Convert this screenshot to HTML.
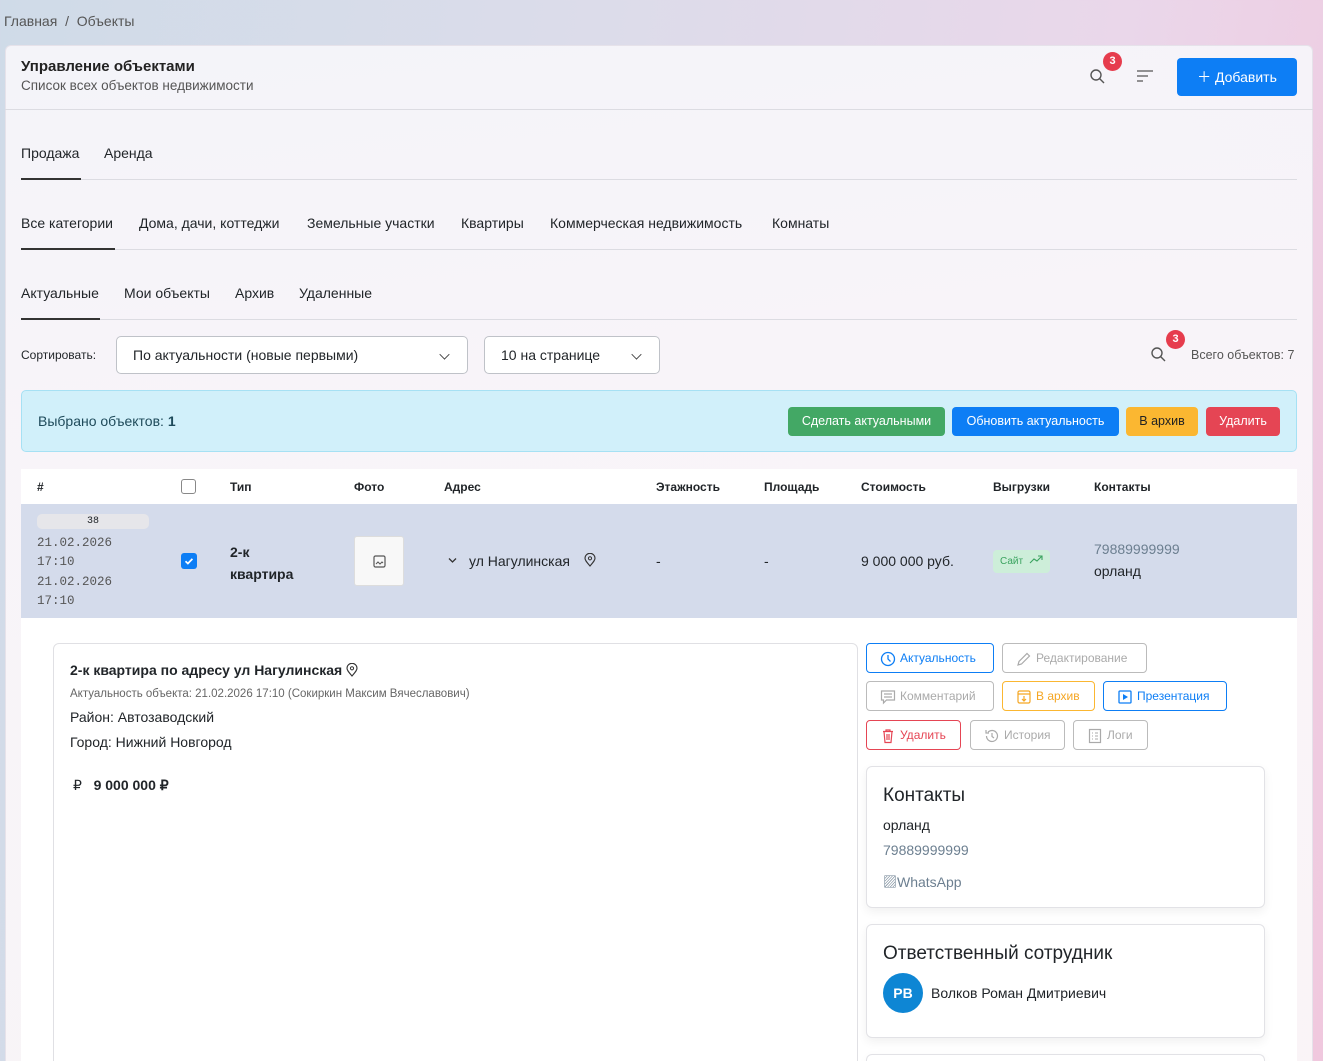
<!DOCTYPE html>
<html><head><meta charset="utf-8"><style>
*{box-sizing:border-box;margin:0;padding:0}
html{width:1323px;height:1061px;overflow:hidden}
body{width:1323px;height:1061px;overflow:hidden;position:relative;font-family:"Liberation Sans","Noto Sans CJK SC",sans-serif;color:#212529;
background:linear-gradient(100deg,#cfdbe8 0%,#dcdcea 40%,#ead7ea 75%,#f0c8de 100%);}
.a{position:absolute;white-space:nowrap}
.card{position:absolute;left:5px;top:45px;width:1308px;height:1016px;border-radius:6px 6px 0 0;
background:linear-gradient(180deg,rgba(246,245,250,.95),rgba(250,246,250,.95) 40%,rgba(250,246,248,.95));border:1px solid #e6e2ea;border-bottom:none}
.hl{position:absolute;left:21px;width:1276px;height:1px;background:#dcdce2}
.ul{position:absolute;height:2px;background:#333}
.t14{font-size:14px}
.sel{position:absolute;height:38px;border:1px solid #bfc2c8;border-radius:5px;background:#fff;font-size:14px;padding:10px 16px}
.chev{position:absolute;right:18px;top:13px;width:9px;height:9px;border-right:1.6px solid #333;border-bottom:1.6px solid #333;transform:rotate(45deg) scale(.8)}
.badge{position:absolute;width:19px;height:19px;border-radius:50%;background:#e63c4d;color:#fff;font-size:11px;font-weight:bold;text-align:center;line-height:19px}
.btn{position:absolute;height:29px;border-radius:4px;font-size:12.5px;color:#fff;text-align:center;line-height:29px}
.th{position:absolute;top:480px;font-size:12px;font-weight:bold}
.ob{position:absolute;height:30px;border:1px solid #bbb;border-radius:4px;font-size:12px;color:#aaa;line-height:28px;padding-left:33px;background:#fff}
.ob svg{position:absolute;left:13px;top:7px}
.box{position:absolute;background:#fff;border:1px solid #e2e2e6;border-radius:6px;box-shadow:0 4px 10px rgba(0,0,0,.06)}
</style></head><body>
<div class="a t14" style="left:4px;top:13px;color:#555">Главная&nbsp; / &nbsp;Объекты</div>
<div class="card"></div>
<div class="a" style="left:21px;top:58px;font-size:15px;font-weight:bold;color:#222">Управление объектами</div>
<div class="a" style="left:21px;top:78px;font-size:13.5px;color:#555">Список всех объектов недвижимости</div>
<div class="a" style="left:5px;top:109px;width:1308px;height:1px;background:#dcdce2"></div>
<svg class="a" style="left:1089px;top:68px" width="17" height="17" viewBox="0 0 17 17"><circle cx="7" cy="7" r="5" fill="none" stroke="#555" stroke-width="1.4"/><path d="M10.5 10.5l4.5 4.5" stroke="#555" stroke-width="1.4"/></svg>
<div class="badge" style="left:1103px;top:52px">3</div>
<svg class="a" style="left:1137px;top:70px" width="17" height="12"><path d="M0 1h16M0 6h11M0 11h6" stroke="#555" stroke-width="1.3"/></svg>
<div class="a" style="left:1177px;top:58px;width:120px;height:38px;background:#0d7ef5;border-radius:4px;color:#fff;font-size:14px;line-height:38px;text-align:center">＋ Добавить</div>

<div class="a t14" style="left:21px;top:145px">Продажа</div>
<div class="a t14" style="left:104px;top:145px">Аренда</div>
<div class="hl" style="top:179px"></div><div class="ul" style="left:21px;top:178px;width:60px;height:1.5px"></div>

<div class="a t14" style="left:21px;top:215px">Все категории</div>
<div class="a t14" style="left:139px;top:215px">Дома, дачи, коттеджи</div>
<div class="a t14" style="left:307px;top:215px">Земельные участки</div>
<div class="a t14" style="left:461px;top:215px">Квартиры</div>
<div class="a t14" style="left:550px;top:215px">Коммерческая недвижимость</div>
<div class="a t14" style="left:772px;top:215px">Комнаты</div>
<div class="hl" style="top:249px"></div><div class="ul" style="left:21px;top:248px;width:94px;height:1.5px"></div>

<div class="a t14" style="left:21px;top:285px">Актуальные</div>
<div class="a t14" style="left:124px;top:285px">Мои объекты</div>
<div class="a t14" style="left:235px;top:285px">Архив</div>
<div class="a t14" style="left:299px;top:285px">Удаленные</div>
<div class="hl" style="top:319px"></div><div class="ul" style="left:21px;top:318px;width:79px;height:1.5px"></div>

<div class="a" style="left:21px;top:348px;font-size:12px">Сортировать:</div>
<div class="sel" style="left:116px;top:336px;width:352px">По актуальности (новые первыми)<div class="chev"></div></div>
<div class="sel" style="left:484px;top:336px;width:176px">10 на странице<div class="chev"></div></div>
<svg class="a" style="left:1150px;top:346px" width="17" height="17" viewBox="0 0 17 17"><circle cx="7" cy="7" r="5" fill="none" stroke="#555" stroke-width="1.4"/><path d="M10.5 10.5l4.5 4.5" stroke="#555" stroke-width="1.4"/></svg>
<div class="badge" style="left:1166px;top:330px">3</div>
<div class="a" style="left:1191px;top:348px;font-size:12.5px;color:#555">Всего объектов: 7</div>

<div class="a" style="left:21px;top:390px;width:1276px;height:62px;background:#d1f0fa;border:1px solid #a6e1f4;border-radius:5px"></div>
<div class="a t14" style="left:38px;top:413px;color:#1e4a5a">Выбрано объектов: <b>1</b></div>
<div class="btn" style="left:788px;top:407px;width:157px;background:#43a865">Сделать актуальными</div>
<div class="btn" style="left:952px;top:407px;width:167px;background:#0d7ef5">Обновить актуальность</div>
<div class="btn" style="left:1126px;top:407px;width:72px;background:#fbb731;color:#222">В архив</div>
<div class="btn" style="left:1206px;top:407px;width:74px;background:#e54554">Удалить</div>

<div class="a" style="left:21px;top:469px;width:1276px;height:35px;background:#fff"></div>
<div class="th" style="left:37px">#</div>
<div class="a" style="left:181px;top:479px;width:15px;height:15px;border:1px solid #888;border-radius:3px;background:#fff"></div>
<div class="th" style="left:230px">Тип</div><div class="th" style="left:354px">Фото</div><div class="th" style="left:444px">Адрес</div>
<div class="th" style="left:656px">Этажность</div><div class="th" style="left:764px">Площадь</div><div class="th" style="left:861px">Стоимость</div>
<div class="th" style="left:993px">Выгрузки</div><div class="th" style="left:1094px">Контакты</div>

<div class="a" style="left:21px;top:504px;width:1276px;height:114px;background:#d4dbeb"></div>
<div class="a" style="left:37px;top:514px;width:112px;height:15px;background:#e6e6ea;border-radius:5px;font-size:10px;text-align:center;line-height:15px;font-family:'Liberation Mono',monospace">38</div>
<div class="a" style="left:37px;top:534px;font-family:'Liberation Mono',monospace;font-size:12.5px;color:#555;line-height:18.5px;white-space:normal;width:90px">21.02.2026<br>17:10</div>
<div class="a" style="left:37px;top:573px;font-family:'Liberation Mono',monospace;font-size:12.5px;color:#555;line-height:18.5px;white-space:normal;width:90px">21.02.2026<br>17:10</div>
<div class="a" style="left:181px;top:553px;width:16px;height:16px;background:#0d7ef5;border-radius:3px"><svg width="16" height="16"><path d="M4.5 8.2l2.4 2.3 4.5-4.6" stroke="#fff" stroke-width="1.7" fill="none"/></svg></div>
<div class="a" style="left:230px;top:541px;font-size:14px;font-weight:bold;line-height:22px">2-к<br>квартира</div>
<div class="a" style="left:354px;top:536px;width:50px;height:50px;background:#f8f8f8;border:1px solid #ddd;border-radius:3px"><svg style="position:absolute;left:18px;top:18px" width="13" height="13"><rect x="1" y="1" width="11" height="11" rx="1.5" fill="none" stroke="#555" stroke-width="1.2"/><path d="M3 9l2-2 2 2 2-2 1 1" stroke="#555" fill="none"/></svg></div>
<svg class="a" style="left:448px;top:557px" width="9" height="7"><path d="M1 1.5l3.5 3.5 3.5-3.5" stroke="#333" stroke-width="1.3" fill="none"/></svg>
<div class="a t14" style="left:469px;top:553px">ул Нагулинская</div>
<svg class="a" style="left:584px;top:553px" width="12" height="14"><path d="M6 13C2 8.5 1 7 1 5.3A5 5 0 0 1 11 5.3C11 7 10 8.5 6 13z" fill="none" stroke="#333" stroke-width="1.1"/><circle cx="6" cy="5.3" r="1.6" fill="none" stroke="#333"/></svg>
<div class="a t14" style="left:656px;top:553px">-</div>
<div class="a t14" style="left:764px;top:553px">-</div>
<div class="a t14" style="left:861px;top:553px">9 000 000 руб.</div>
<div class="a" style="left:993px;top:550px;width:57px;height:23px;background:#cdeed9;border-radius:4px;font-size:10px;color:#3aa35f;line-height:23px;padding-left:7px">Сайт <svg width="14" height="9" style="margin-left:3px"><path d="M1 8l4-4 3 2 5-5M9 1h4v4" stroke="#3aa35f" fill="none" stroke-width="1.1"/></svg></div>
<div class="a" style="left:1094px;top:541px;font-size:14px;color:#6c7f90">79889999999</div>
<div class="a t14" style="left:1094px;top:563px">орланд</div>

<div class="a" style="left:21px;top:618px;width:1276px;height:443px;background:#fff"></div>
<div class="a" style="left:53px;top:643px;width:805px;height:430px;border:1px solid #e0e0e4;border-radius:6px;background:#fff"></div>
<div class="a" style="left:70px;top:662px;font-size:14px;font-weight:bold">2-к квартира по адресу ул Нагулинская <svg width="12" height="14" style="vertical-align:-2px"><path d="M6 13C2 8.5 1 7 1 5.3A5 5 0 0 1 11 5.3C11 7 10 8.5 6 13z" fill="none" stroke="#333" stroke-width="1.1"/><circle cx="6" cy="5.3" r="1.6" fill="none" stroke="#333"/></svg></div>
<div class="a" style="left:70px;top:688px;font-size:11.5px;color:#666">Актуальность объекта: 21.02.2026 17:10 (Сокиркин Максим Вячеславович)</div>
<div class="a t14" style="left:70px;top:709px">Район: Автозаводский</div>
<div class="a t14" style="left:70px;top:734px">Город: Нижний Новгород</div>
<div class="a t14" style="left:73px;top:777px">₽ &nbsp; <b>9 000 000 ₽</b></div>

<div class="ob" style="left:866px;top:643px;width:128px;border-color:#0d7ef5;color:#0d7ef5"><svg width="16" height="16"><circle cx="8" cy="8" r="6.5" fill="none" stroke="#0d7ef5" stroke-width="1.3"/><path d="M8 4v4l2.5 2.5" stroke="#0d7ef5" stroke-width="1.3" fill="none"/></svg>Актуальность</div>
<div class="ob" style="left:1002px;top:643px;width:145px"><svg width="16" height="16"><path d="M2 14l1-3.5 8-8 2.5 2.5-8 8z" fill="none" stroke="#aaa" stroke-width="1.2"/></svg>Редактирование</div>
<div class="ob" style="left:866px;top:681px;width:128px"><svg width="16" height="16"><path d="M1.5 2h13v9h-8l-3 3v-3h-2z M4 5h8M4 8h8" fill="none" stroke="#aaa" stroke-width="1.2"/></svg>Комментарий</div>
<div class="ob" style="left:1002px;top:681px;width:93px;border-color:#fbb731;color:#f5a623"><svg width="16" height="16"><rect x="2" y="2" width="12" height="12" rx="1.5" fill="none" stroke="#f5a623" stroke-width="1.2"/><path d="M2 5h12M8 7v5M6 10l2 2 2-2" stroke="#f5a623" fill="none" stroke-width="1.2"/></svg>В архив</div>
<div class="ob" style="left:1103px;top:681px;width:124px;border-color:#0d7ef5;color:#0d7ef5"><svg width="16" height="16"><rect x="2" y="2" width="12" height="12" rx="1" fill="none" stroke="#0d7ef5" stroke-width="1.3"/><path d="M6 5v6l5-3z" fill="#0d7ef5"/></svg>Презентация</div>
<div class="ob" style="left:866px;top:720px;width:95px;border-color:#e54554;color:#e54554"><svg width="16" height="16"><path d="M3 3.5h10M6 3.5V2h4v1.5M4 3.5l1 11h6l1-11M7 6v6M9 6v6" fill="none" stroke="#e54554" stroke-width="1.2"/></svg>Удалить</div>
<div class="ob" style="left:970px;top:720px;width:95px"><svg width="16" height="16"><path d="M2.5 8a5.5 5.5 0 1 0 1.6-3.9M2 2v3h3M8 5v3.5l2 1.5" fill="none" stroke="#aaa" stroke-width="1.2"/></svg>История</div>
<div class="ob" style="left:1073px;top:720px;width:75px"><svg width="16" height="16"><rect x="2.5" y="1.5" width="11" height="13" fill="none" stroke="#aaa" stroke-width="1.2"/><path d="M5 5h1M8 5h3M5 8h1M8 8h3M5 11h1M8 11h3" stroke="#aaa"/></svg>Логи</div>

<div class="box" style="left:866px;top:766px;width:399px;height:142px"></div>
<div class="a" style="left:883px;top:785px;font-size:19px">Контакты</div>
<div class="a t14" style="left:883px;top:817px">орланд</div>
<div class="a t14" style="left:883px;top:842px;color:#6c7f90">79889999999</div>
<div class="a t14" style="left:883px;top:872px;color:#6c7f90">▨WhatsApp</div>

<div class="box" style="left:866px;top:924px;width:399px;height:114px"></div>
<div class="a" style="left:883px;top:943px;font-size:19px">Ответственный сотрудник</div>
<div class="a" style="left:883px;top:973px;width:40px;height:40px;border-radius:50%;background:#0e86d4;color:#fff;font-weight:bold;font-size:14px;text-align:center;line-height:40px">PB</div>
<div class="a t14" style="left:931px;top:985px">Волков Роман Дмитриевич</div>
<div class="box" style="left:866px;top:1054px;width:399px;height:7px;border-bottom:none;border-radius:6px 6px 0 0"></div>
</body></html>
